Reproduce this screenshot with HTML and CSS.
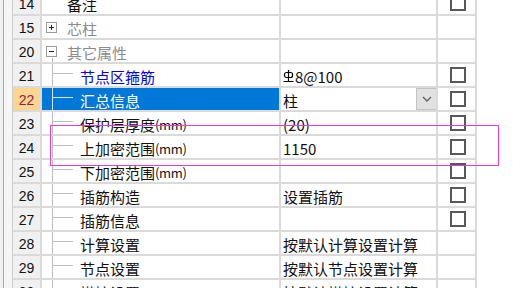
FILE: index.html
```html
<!DOCTYPE html>
<html lang="zh-CN">
<head>
  <meta charset="UTF-8" />
  <title>属性编辑器</title>
  <link rel="stylesheet" href="styles.css">
</head>
<body>
  <div class="panel">
    <div class="edge"></div>

    <!-- 属性表格 -->
    <div class="grid">
      <div class="row">
        <div class="num">14</div>
        <div class="name">备注</div>
        <div class="val"></div>
        <div class="chk"><span class="box"></span></div>
      </div>
      <div class="row">
        <div class="num">15</div>
        <div class="name group">
          <svg class="toggle" width="11" height="11" viewBox="0 0 11 11"><rect x="0.5" y="0.5" width="10" height="10" fill="#fff" stroke="#9a9a9a"/><path d="M3 5.5h5M5.5 3v5" stroke="#222"/></svg>
          <span class="dim">芯柱</span>
        </div>
        <div class="val"></div>
        <div class="chk"></div>
      </div>
      <div class="row">
        <div class="num">20</div>
        <div class="name group open">
          <svg class="toggle" width="11" height="11" viewBox="0 0 11 11"><rect x="0.5" y="0.5" width="10" height="10" fill="#fff" stroke="#9a9a9a"/><path d="M3 5.5h5" stroke="#222"/></svg>
          <span class="dim">其它属性</span>
        </div>
        <div class="val"></div>
        <div class="chk"></div>
      </div>
      <div class="row">
        <div class="num">21</div>
        <div class="name leaf link">节点区箍筋</div>
        <div class="val">
          <svg class="grade" width="11" height="14" viewBox="0 0 11 14"><rect x="1.5" y="3.5" width="8" height="5" rx="2" fill="none" stroke="#000" stroke-width="1.2"/><path d="M5.5 1v11M0.5 12.5h10" stroke="#000" stroke-width="1.2" fill="none"/></svg>8@100
        </div>
        <div class="chk"><span class="box"></span></div>
      </div>
      <div class="row sel">
        <div class="num">22</div>
        <div class="name leaf">汇总信息</div>
        <div class="val combo">
          <span>柱</span>
          <span class="drop"><svg width="10" height="6" viewBox="0 0 10 6"><path d="M1 1l4 4 4-4" fill="none" stroke="#606060" stroke-width="1.3"/></svg></span>
        </div>
        <div class="chk"><span class="box"></span></div>
      </div>
      <div class="row">
        <div class="num">23</div>
        <div class="name leaf">保护层厚度<span class="unit">(mm)</span></div>
        <div class="val">(20)</div>
        <div class="chk"><span class="box"></span></div>
      </div>
      <div class="row">
        <div class="num">24</div>
        <div class="name leaf">上加密范围<span class="unit">(mm)</span></div>
        <div class="val">1150</div>
        <div class="chk"><span class="box"></span></div>
      </div>
      <div class="row">
        <div class="num">25</div>
        <div class="name leaf">下加密范围<span class="unit">(mm)</span></div>
        <div class="val"></div>
        <div class="chk"><span class="box"></span></div>
      </div>
      <div class="row">
        <div class="num">26</div>
        <div class="name leaf">插筋构造</div>
        <div class="val">设置插筋</div>
        <div class="chk"><span class="box"></span></div>
      </div>
      <div class="row">
        <div class="num">27</div>
        <div class="name leaf">插筋信息</div>
        <div class="val"></div>
        <div class="chk"><span class="box"></span></div>
      </div>
      <div class="row">
        <div class="num">28</div>
        <div class="name leaf">计算设置</div>
        <div class="val">按默认计算设置计算</div>
        <div class="chk"></div>
      </div>
      <div class="row">
        <div class="num">29</div>
        <div class="name leaf">节点设置</div>
        <div class="val">按默认节点设置计算</div>
        <div class="chk"></div>
      </div>
      <div class="row">
        <div class="num">30</div>
        <div class="name leaf">搭接设置</div>
        <div class="val">按默认搭接设置计算</div>
        <div class="chk"></div>
      </div>
    </div>
  </div>

  <!-- 标注框 -->
  <div class="mark"></div>
</body>
</html>
```

FILE: styles.css
```css
* { margin: 0; padding: 0; box-sizing: border-box; }
html, body { width: 100%; height: 100%; background: #fff; overflow: hidden; }
body {
  font-family: "Noto Sans CJK SC", sans-serif;
  font-size: 15px; color: #111;
}

.panel { display: flex; height: 100%; }

/* 左侧边框 */
.edge {
  width: 13px; flex: none;
  background: linear-gradient(to right,
    #f0f0f0 0 3px, #a9a9a9 3px 4px, #f6f6f6 4px 12px, #cdcdcd 12px 13px);
}

/* 表格 */
.grid { width: 464px; flex: none; margin-top: -8px; }
.row { display: flex; height: 24px; }
.row > div {
  display: flex; align-items: center;
  padding-top: 2px;
  border-right: 2px solid #dadada;
  border-bottom: 2px solid #dadada;
  white-space: nowrap; overflow: hidden;
}

.num {
  width: 29px; justify-content: center;
  background: #f0f0f0;
  font-family: "Liberation Sans", sans-serif; font-size: 14px;
}
.name { width: 239px; padding-left: 25px; }
.val { width: 157px; padding-left: 2px; }
.chk { width: 39px; padding-left: 12px; }

.box {
  width: 16px; height: 16px;
  border: 2px solid #585858; background: #fff;
  margin-top: -2px;
}

/* 分组 */
.group { padding-left: 4px; }
.group .toggle { flex: none; margin-right: 10px; margin-top: -1px; }
.group.open {
  background: linear-gradient(#bdbdbd, #bdbdbd) 10px 18px / 1px 100% no-repeat;
}
.dim { color: #8c8c8c; }

/* 树状连线 */
.leaf {
  padding-left: 38px;
  background-image: linear-gradient(#bdbdbd, #bdbdbd), linear-gradient(#bdbdbd, #bdbdbd);
  background-size: 1px 100%, 21px 1px;
  background-position: 10px 0, 10px 9px;
  background-repeat: no-repeat;
}
.link { color: #0000ee; }
.unit { font-size: 13px; letter-spacing: -0.3px; }

/* 选中行 */
.sel .num { background: #fcd590; color: #8e1f48; }
.sel .name {
  background-color: #0078d7; color: #fff;
  background-image: linear-gradient(#d4e6f7, #d4e6f7), linear-gradient(#d4e6f7, #d4e6f7);
}
.combo { justify-content: space-between; padding-right: 0; }
.combo .drop {
  align-self: stretch;
  width: 21px; margin-top: -2px; margin-right: -1px;
  display: flex; align-items: center; justify-content: center;
  background: #e1e1e1; border: 1px solid #c4c4c4;
}

.grade { margin-right: 1px; margin-top: -1px; }

/* 标注框 */
.mark {
  position: absolute; left: 50px; top: 125px;
  width: 449px; height: 41px;
  border: 1px solid #e03ce0;
}
```
